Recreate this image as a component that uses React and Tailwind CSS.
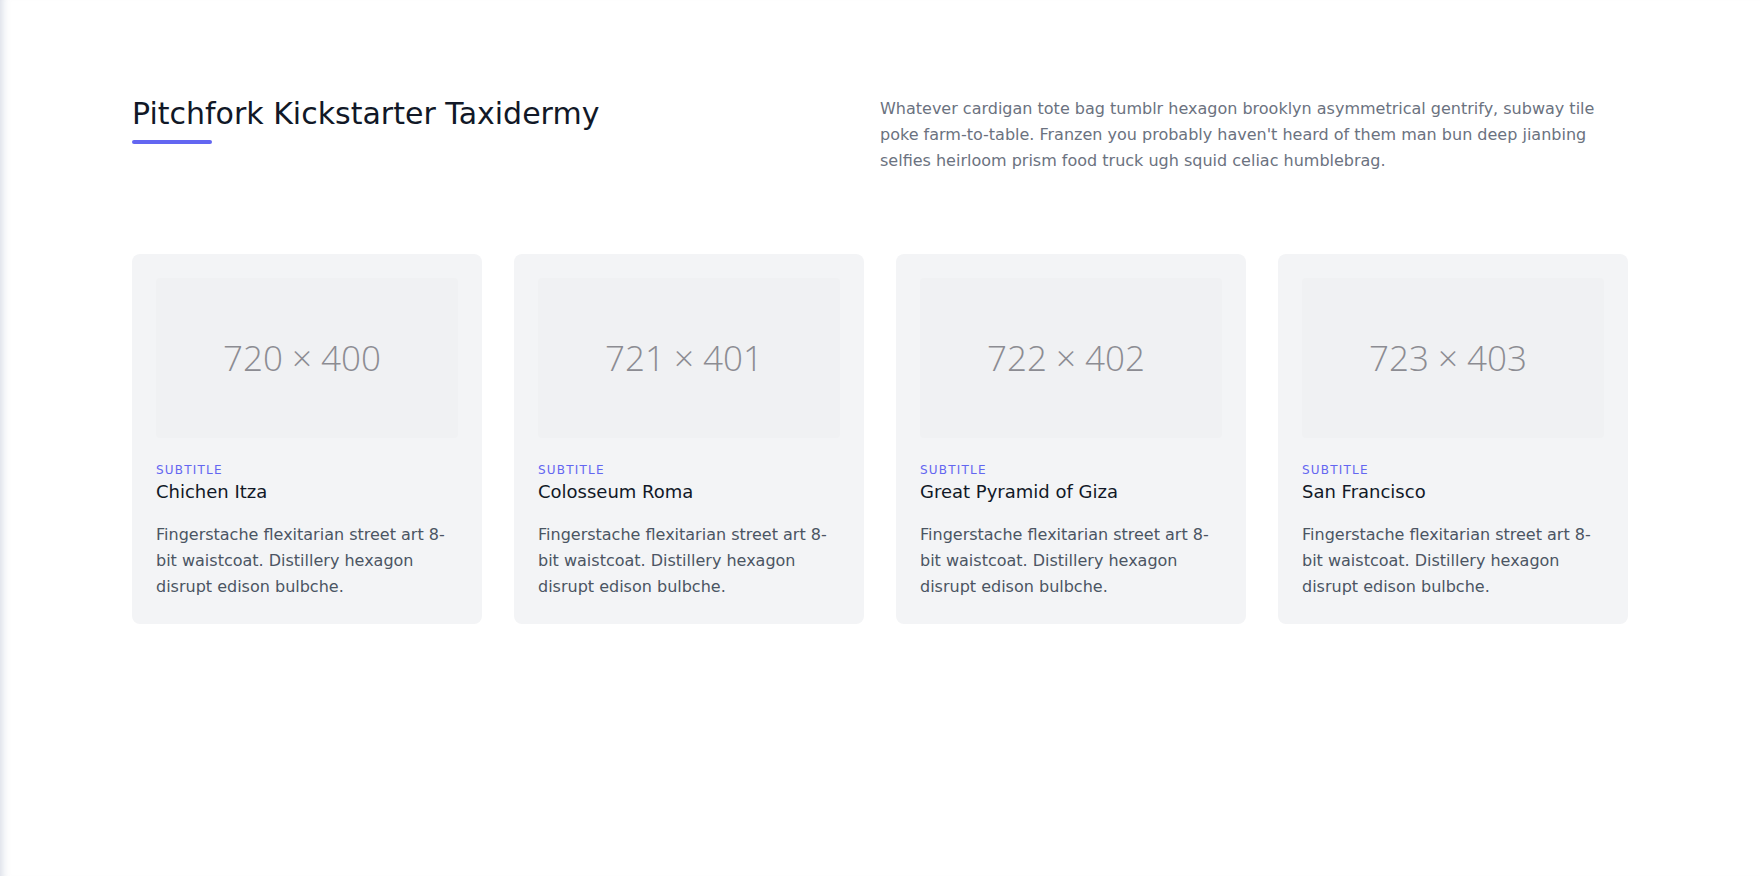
const places = [
  { size: "720 × 400", title: "Chichen Itza" },
  { size: "721 × 401", title: "Colosseum Roma" },
  { size: "722 × 402", title: "Great Pyramid of Giza" },
  { size: "723 × 403", title: "San Francisco" },
];

const Card = ({ size, title }) => (
  <div className="w-1/4 p-4">
    <div className="bg-[#f3f4f6] p-6 rounded-lg">
      <div className="h-40 w-full rounded mb-6 bg-[#f0f1f3] flex items-center justify-center pr-[10px]">
        <span className="font-['Open_Sans',sans-serif] font-light text-[35px] text-[#8c8c92]">
          {size}
        </span>
      </div>
      <h3 className="tracking-widest text-[#6366f1] text-xs font-medium">
        SUBTITLE
      </h3>
      <h2 className="text-lg text-[#111827] font-medium mb-4">{title}</h2>
      <p className="leading-relaxed text-base text-[#4b5563]">
        Fingerstache flexitarian street art 8-bit waistcoat. Distillery hexagon
        disrupt edison bulbche.
      </p>
    </div>
  </div>
);

const App = () => {
  return (
    <section className="min-h-screen bg-white text-[#4b5563] font-['DejaVu_Sans',sans-serif] shadow-[inset_10px_0_8px_-8px_rgba(60,80,130,0.22)]">
      <div className="max-w-[1536px] px-5 py-24 mx-auto">
        {/* Header */}
        <div className="flex w-full mb-20">
          <div className="w-1/2">
            <h1 className="text-3xl font-medium mb-2 text-[#111827]">
              Pitchfork Kickstarter Taxidermy
            </h1>
            <div className="h-1 w-20 bg-[#6366f1] rounded"></div>
          </div>
          <p className="w-1/2 leading-relaxed text-[#6b7280]">
            Whatever cardigan tote bag tumblr hexagon brooklyn asymmetrical
            gentrify, subway tile poke farm-to-table. Franzen you probably
            haven't heard of them man bun deep jianbing selfies heirloom prism
            food truck ugh squid celiac humblebrag.
          </p>
        </div>

        {/* Cards */}
        <div className="flex flex-wrap -m-4">
          {places.map((p) => (
            <Card key={p.title} size={p.size} title={p.title} />
          ))}
        </div>
      </div>
    </section>
  );
};

export default App;
